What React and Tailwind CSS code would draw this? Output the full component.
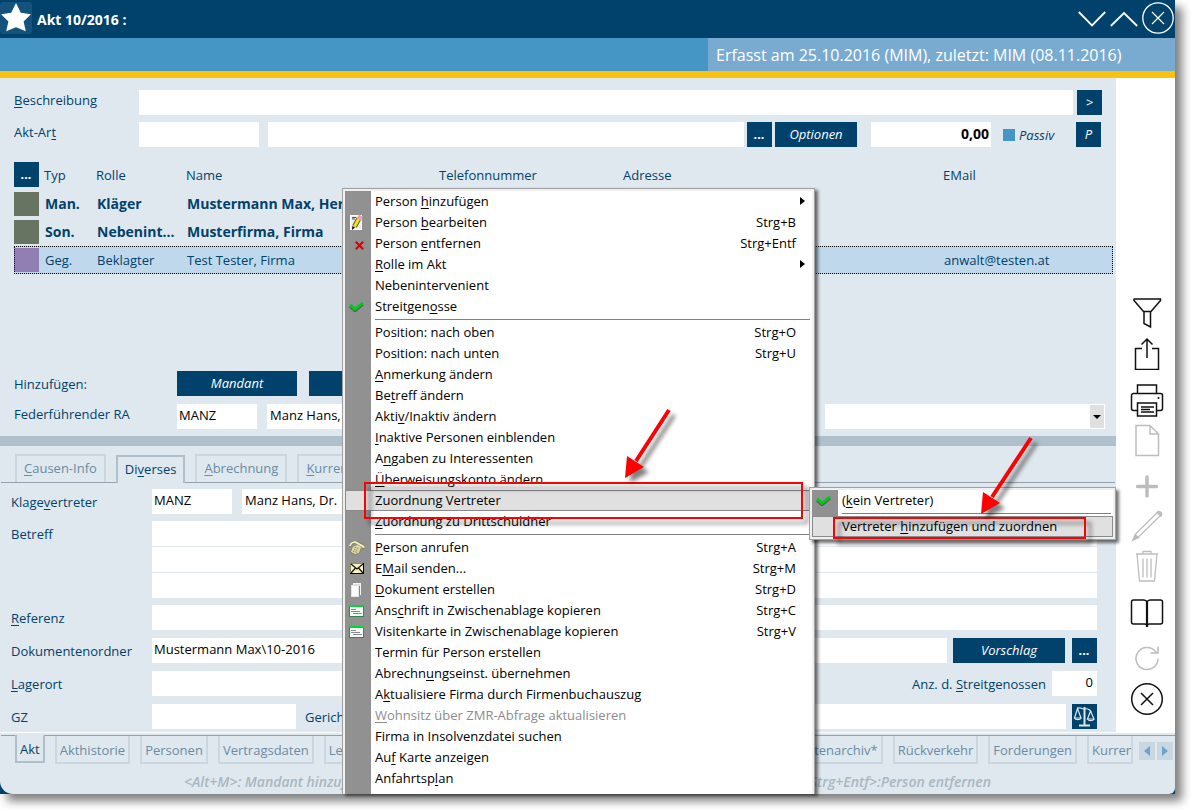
import React from "react";

const field = "h-[25px] min-w-0 border-0 bg-white px-[2px] pb-[3px] text-[13px] text-black outline-none";
const navy = "h-[25px] shrink-0 bg-[#00426b] text-[13px] leading-[25px] italic text-white";

/* Marks the character after "&" as the mnemonic. */
function Mn({ t }) {
  const i = t.indexOf("&");
  if (i < 0) return <>{t}</>;
  return (
    <>
      {t.slice(0, i)}
      <span className="underline underline-offset-2">{t[i + 1]}</span>
      {t.slice(i + 2)}
    </>
  );
}

const Star = () => (
  <svg width="32" height="32" viewBox="0 0 32 32">
    <rect width="32" height="32" rx="3" fill="#12527c" />
    <path d="M16 1l4.800 9.800 10.200 1.400-7.400 7.300 2.200 9.700L16 25.300l-9.800 3.900 2.200-9.700L1 12.200l10.200-1.400z" fill="#fff" />
  </svg>
);

const Check = () => (
  <svg width="15" height="11" viewBox="0 0 15 11">
    <path d="M1 5.500l5 4.500L14 3.200" fill="none" stroke="#4c5a4c" strokeWidth="2.500" />
    <path d="M1 4l5 4.200L14 1.800" fill="none" stroke="#00c81e" strokeWidth="3" />
  </svg>
);

const EditIcon = () => (
  <svg width="13" height="17" viewBox="0 0 13 17">
    <rect x="0.500" y="1.500" width="11" height="14" fill="#efefef" stroke="#fff" />
    <path d="M2 3.500h4M2 5h3" stroke="#555" />
    <path d="M9 4.500L4.500 12.500" stroke="#6b6200" strokeWidth="5" />
    <path d="M9 4.500L4.500 12.500" stroke="#f2df2a" strokeWidth="3" />
    <path d="M7 3.800l4.500 2.500" stroke="#bbb" strokeWidth="1.500" />
    <path d="M8 2.200l4 2.200" stroke="#f59ab4" strokeWidth="4" />
    <path d="M2 16l.3-4 2.700 1.500z" fill="#111" />
  </svg>
);

const CrossIcon = () => (
  <svg width="9" height="9" viewBox="0 0 9 9">
    <path d="M.8.8l7.400 7.400M8.200.8L.8 8.200" stroke="#d80000" strokeWidth="2" />
  </svg>
);

const PhoneIcon = () => (
  <svg width="16" height="14" viewBox="0 0 16 14">
    <path d="M3.500 5.500L9 3l4 2.500-3 7L6 13.500 1.500 11z" fill="#dedba6" stroke="#77744e" strokeWidth=".7" />
    <path d="M1 5.500C1.500 2.500 4 .8 6.500 1.200L14.500 5.500v2" fill="none" stroke="#77744e" strokeWidth="3" />
    <path d="M1 5C1.500 2.500 4 .8 6.500 1.200L14.500 5.500v1.500" fill="none" stroke="#f3f1c4" strokeWidth="2" />
    <path d="M6 6l4 2M5 8l4 2M4 10l4 1.500" stroke="#7d7a50" strokeWidth="1" strokeDasharray="1.500 1" />
  </svg>
);

const MailIcon = () => (
  <svg width="14" height="11" viewBox="0 0 14 11">
    <rect x=".5" y=".5" width="13" height="10" fill="#f6f3c0" stroke="#8c8c50" />
    <path d="M1 1l6 5L13 1M1 10l4.500-5M13 10L8.500 5" fill="none" stroke="#111" strokeWidth="1.200" />
    <path d="M0 10.500h14M13.500 0v11" stroke="#000" />
  </svg>
);

const DocsIcon = () => (
  <svg width="11" height="14" viewBox="0 0 11 14">
    <rect x="2.500" y=".5" width="7" height="11" fill="#ddd" stroke="#f5f5f5" />
    <rect x=".5" y="2.500" width="7" height="11" fill="#fff" stroke="#e4e4e4" />
    <path d="M8.500 3v9.500" stroke="#888" />
  </svg>
);

const CardIcon = () => (
  <svg width="15" height="12" viewBox="0 0 15 12">
    <rect x=".5" y=".5" width="14" height="11" fill="#f4faf4" stroke="#2c8a4a" />
    <path d="M0 1h15" stroke="#00d63c" strokeWidth="2" />
    <path d="M2 4.500h5M2 6.500h9M4 8.500h9" stroke="#8a8a8a" />
  </svg>
);

const menu = [
  { t: "Person &hinzufügen", sub: true },
  { t: "Person &bearbeiten", k: "Strg+B", i: <EditIcon /> },
  { t: "Person &entfernen", k: "Strg+Entf", i: <span className="pl-[6px] pt-[3px]"><CrossIcon /></span> },
  { t: "&Rolle im Akt", sub: true },
  { t: "Nebenintervenient" },
  { t: "Streitgen&osse", i: <Check /> },
  null,
  { t: "Position: nach oben", k: "Strg+O" },
  { t: "Position: nach unten", k: "Strg+U" },
  { t: "&Anmerkung ändern" },
  { t: "Be&treff ändern" },
  { t: "Akti&v/Inaktiv ändern" },
  { t: "&Inaktive Personen einblenden" },
  { t: "A&ngaben zu Interessenten" },
  { t: "&Überweisungskonto ändern" },
  { t: "Zuordnung Vertreter", active: true },
  { t: "&Zuordnung zu Drittschuldner" },
  null,
  { t: "&Person anrufen", k: "Strg+A", i: <PhoneIcon /> },
  { t: "E&Mail senden...", k: "Strg+M", i: <MailIcon /> },
  { t: "&Dokument erstellen", k: "Strg+D", i: <DocsIcon /> },
  { t: "Ans&chrift in Zwischenablage kopieren", k: "Strg+C", i: <CardIcon /> },
  { t: "Visitenkarte in Zwischenablage kopieren", k: "Strg+V", i: <CardIcon /> },
  { t: "Termin für Person erstellen" },
  { t: "Abrechn&ungseinst. übernehmen" },
  { t: "A&ktualisiere Firma durch Firmenbuchauszug" },
  { t: "&Wohnsitz über ZMR-Abfrage aktualisieren", off: true },
  { t: "Firma in Insolvenzdatei suchen" },
  { t: "Au&f Karte anzeigen" },
  { t: "Anfahrtsp&lan" },
];

const submenu = [
  { t: "(&kein Vertreter)", i: <Check /> },
  null,
  { t: "Vertreter &hinzufügen und zuordnen", active: true },
];

function MenuRows({ items }) {
  return items.map((m, n) =>
    m === null ? (
      <div key={n} role="separator" className="flex h-[5px]">
        <div className="w-[26px] shrink-0 bg-[#919191]" />
        <div className="mr-[2px] ml-1 mt-[2px] h-px flex-1 bg-[#808080]" />
      </div>
    ) : (
      <button
        key={n}
        role="menuitem"
        disabled={m.off}
        className={
          "flex h-[21px] w-full items-stretch text-left text-[13px] leading-[19px] " +
          (m.active ? "border border-[#8a8a8a] bg-[#e0e0e0] " : "border border-transparent ") +
          (m.off ? "text-[#8c8c8c]" : "text-black")
        }
      >
        <span
          className={
            "-my-px -ml-px flex w-[26px] shrink-0 items-center justify-center pr-[3px] " + (m.active ? "" : "bg-[#919191]")
          }
        >
          {m.i}
        </span>
        <span className="flex-1 pl-1"><Mn t={m.t} /></span>
        {m.k && <span className="pr-[15px]">{m.k}</span>}
        {m.sub && (
          <svg className="mt-[5px] mr-[6px]" width="5" height="8" viewBox="0 0 5 8"><path d="M0 0l5 4-5 4z" fill="#000" /></svg>
        )}
      </button>
    )
  );
}

function Tool({ label, children, off, className }) {
  return (
    <button aria-label={label} className={className + " block"}>
      <svg width="34" height="34" viewBox="0 0 34 34" fill="none" stroke={off ? "#bdbdbd" : "#111"} strokeWidth="1.500">
        {children}
      </svg>
    </button>
  );
}

function Sidebar() {
  return (
    <aside className="flex w-[59px] shrink-0 flex-col items-center bg-white pt-[217px] pl-[3px]">
      <Tool label="Filter" className="mt-0">
        <path d="M3.500 4h27v1.500L21 16.500h-7.500L4 5.500V4M14 16.500v12l6.500 3.500V16.500" />
      </Tool>
      <Tool label="Teilen" className="mt-[7px]">
        <path d="M12 12.500H5.500v21h23v-21H22M17 22V3M11.500 8.500L17 3l5.500 5.500" />
      </Tool>
      <Tool label="Drucken" className="mt-[13px]">
        <path d="M7.500 10.500V2h19v8.500M7 27.500H3.500a2 2 0 0 1-2-2v-13a2 2 0 0 1 2-2h27a2 2 0 0 1 2 2v13a2 2 0 0 1-2 2H27M7.500 20h19v13h-19zM11 24h13M11 26.500h9M11 29h13" />
        <circle cx="28.500" cy="15" r="1" fill="#111" stroke="none" />
      </Tool>
      <Tool label="Neu" off className="mt-[6px]">
        <path d="M6 2.500h14l8.500 8.500v21.500H6zM20 2.500v8.500h8.500" />
      </Tool>
      <Tool label="Hinzufügen" off className="mt-[12px]">
        <path d="M17 8v19M7.500 17.500h19" strokeWidth="3.500" strokeLinecap="round" />
      </Tool>
      <Tool label="Bearbeiten" off className="mt-[5px]">
        <path d="M4 31l2-5.500L27.500 4.500l3 3L9 28.500z" strokeWidth="1.300" />
        <path d="M27 4.500a2.500 2.500 0 0 1 4 3.500zM3 32l2-5 3.500 2.500z" fill="#bdbdbd" />
      </Tool>
      <Tool label="Löschen" off className="mt-[7px]">
        <path d="M6 5h22M13 5V2.500h8V5M7 5l2.500 27h15L27 5M13 9.500v19M17 9.500v19M21 9.500v19" strokeWidth="1.300" />
      </Tool>
      <Tool label="Buch" className="mt-[12px]">
        <path d="M17 6.500c-1-1-2-1.500-3.500-1.500h-10a2 2 0 0 0-2 2v20a2 2 0 0 0 2 2h11c1.500 0 2 .5 2.500 1 .5-.5 1-1 2.500-1h11a2 2 0 0 0 2-2V7a2 2 0 0 0-2-2h-10c-1.500 0-2.500.5-3.500 1.500" />
        <path d="M17 6v26" strokeWidth="2.200" />
      </Tool>
      <Tool label="Aktualisieren" off className="mt-[12px]">
        <path d="M28 17.500a11 11 0 1 1-3-7.500l2.500 2M20.500 12h7.500V5.500" />
      </Tool>
      <Tool label="Schließen" className="mt-[7px]">
        <circle cx="17" cy="17" r="15.300" />
        <path d="M11 11l12 12M23 11L11 23" />
      </Tool>
    </aside>
  );
}

const TopLabel = ({ t, id, className }) => (
  <label htmlFor={id} className={"shrink-0 pb-[6px] pl-[14px] text-[13px] " + className}><Mn t={t} /></label>
);
const Label = ({ t, id }) => (
  <label htmlFor={id} className="w-[152px] shrink-0 pl-[11px] text-[13px]"><Mn t={t} /></label>
);

const persons = [
  { c: "bg-[#687462]", typ: "Man.", rolle: "Kläger", name: "Mustermann Max, Herr", mail: "", b: true },
  { c: "bg-[#687462]", typ: "Son.", rolle: "Nebenint...", name: "Musterfirma, Firma", mail: "", b: true },
  { c: "bg-[#917fb3]", typ: "Geg.", rolle: "Beklagter", name: "Test Tester, Firma", mail: "anwalt@testen.at", sel: true },
];

function Persons() {
  return (
    <table className="mt-[15px] ml-[14px] w-[calc(100%-17px)] table-fixed border-collapse text-left text-[13px]">
      <colgroup>
        <col className="w-[25px]" /><col className="w-[52px]" /><col className="w-[90px]" /><col className="w-[253px]" />
        <col className="w-[184px]" /><col className="w-[320px]" /><col />
      </colgroup>
      <thead>
        <tr className="h-[28px] align-top">
          <th className="p-0"><button className={navy + " w-full font-bold"}>...</button></th>
          {["Typ", "Rolle", "Name", "Telefonnummer", "Adresse", "EMail"].map((h) => (
            <th key={h} className="p-0 pl-[5px] leading-[26px] font-normal">{h}</th>
          ))}
        </tr>
      </thead>
      <tbody>
        {persons.map((p) => (
          <tr
            key={p.typ}
            className={
              "h-[28px] " +
              (p.sel ? "bg-[#bfd8eb] outline-1 -outline-offset-1 outline-dotted outline-black " : "") +
              (p.b ? "text-[14px] font-bold" : "")
            }
          >
            <td className="p-0"><div className={"h-[24px] w-full " + p.c} /></td>
            <td className="p-0 pl-[6px]">{p.typ}</td>
            <td className="p-0 pl-[6px] whitespace-nowrap">{p.rolle}</td>
            <td className="p-0 pl-[6px] whitespace-nowrap">{p.name}</td>
            <td className="p-0" />
            <td className="p-0" />
            <td className="p-0 pl-[6px]">{p.mail}</td>
          </tr>
        ))}
      </tbody>
    </table>
  );
}

function TopTab({ t, active }) {
  return (
    <button
      role="tab"
      className={
        "shrink-0 border-2 border-b-0 px-[7px] text-[13px] " +
        (active
          ? "-mb-px h-[28px] border-[#afbfcc] bg-[#e0e8ef] pb-[2px] text-[#00426b]"
          : "h-[28px] border-[#cad7e1] pb-[2px] text-[#6a8ba4]")
      }
    >
      <Mn t={t} />
    </button>
  );
}

function BottomTab({ t, active, className = "px-[3px]" }) {
  return (
    <button
      role="tab"
      className={
        "h-[28px] shrink-0 border-2 border-t-0 pt-[2px] text-[13px] whitespace-nowrap " +
        (active ? "-mt-px border-[#afbfcc] bg-[#e0e8ef] text-[#00426b] " : "border-[#cad7e1] text-[#6a8ba4] ") +
        className
      }
    >
      {t}
    </button>
  );
}

export default function App() {
  return (
    <div className="bg-white pb-4 font-['Open_Sans','Noto_Sans',sans-serif] leading-[18px] text-[#00426b]">
      <div className="relative mr-4 bg-[#00426b] shadow-[7px_7px_9px_rgba(0,0,0,0.5)]">
        <header className="flex h-[38px] items-center pb-[2px] text-white">
          <Star />
          <h1 className="ml-[5px] flex-1 pt-[4px] text-[14px] font-bold">Akt 10/2016 :</h1>
          <div className="flex gap-[4px] pr-px">
            <button aria-label="Minimieren">
              <svg width="28" height="34" viewBox="0 0 28 34" fill="none" stroke="#fff" strokeWidth="1.800"><path d="M.8 11L14 24.500 27.200 11" /></svg>
            </button>
            <button aria-label="Maximieren">
              <svg width="28" height="34" viewBox="0 0 28 34" fill="none" stroke="#fff" strokeWidth="1.800"><path d="M.8 25L14 12l13.200 13" /></svg>
            </button>
            <button aria-label="Schließen">
              <svg width="32" height="34" viewBox="0 0 32 34" fill="none" stroke="#fff" strokeWidth="1.300"><circle cx="16" cy="17" r="15.200" /><path d="M10 11l12 12M22 11L10 23" /></svg>
            </button>
          </div>
        </header>
        <div className="flex h-[33px] justify-end bg-[#4595c5]">
          <div className="w-[467px] bg-[#79abd1] pl-2 text-[16px] leading-[34px] text-white">
            Erfasst am 25.10.2016 (MIM), zuletzt: MIM (08.11.2016)
          </div>
        </div>
        <div className="h-[7px] bg-[#f9c20f]" />

        <div className="flex bg-white">
          <main className="min-w-0 flex-1 bg-[#e0e8ef]">
            <div className="flex items-center pt-3 pr-[14px]">
              <TopLabel t="&Beschreibung" id="beschr" className="w-[139px]" />
              <input id="beschr" className={field + " flex-1"} />
              <button className={navy + " ml-1 w-[25px]"}>&gt;</button>
            </div>
            <div className="mt-[7px] flex items-center pr-[15px]">
              <TopLabel t="Akt-Ar&t" id="art" className="w-[139px]" />
              <input id="art" className={field + " w-[120px]"} />
              <input aria-label="Akt-Art Bezeichnung" className={field + " ml-[9px] flex-1"} />
              <button className={navy + " ml-[3px] w-[25px] font-bold"}>...</button>
              <button className={navy + " ml-[3px] w-[82px]"}>Optionen</button>
              <input
                aria-label="Betrag"
                defaultValue="0,00"
                className="ml-[14px] h-[25px] w-[120px] bg-white px-[2px] pb-[3px] text-right text-[14px] font-bold text-black outline-none"
              />
              <label className="ml-[12px] flex w-[73px] items-center gap-1 text-[13px] italic">
                <input type="checkbox" className="size-[12px] appearance-none bg-[#4595c5]" />
                Passiv
              </label>
              <button className={navy + " w-[25px]"}>P</button>
            </div>

            <Persons />

            <div className="mt-[97px] flex items-center">
              <span className="w-[177px] shrink-0 pl-[14px] text-[13px]">Hinzufügen:</span>
              <button className={navy + " w-[120px]"}>Mandant</button>
              <button aria-label="Gegner" className={navy + " ml-3 w-[120px]"} />
            </div>
            <div className="mt-[8px] flex items-center pr-[11px]">
              <TopLabel t="Federführender RA" id="ra" className="w-[177px]" />
              <input id="ra" defaultValue="MANZ" className={field + " w-[80px]"} />
              <input aria-label="Name RA" defaultValue="Manz Hans, Dr." className={field + " ml-[10px] w-[300px] pl-[3px]"} />
              <div className="ml-auto flex h-[25px] w-[280px] bg-white p-px">
                <select aria-label="Auswahl" className="min-w-0 flex-1 appearance-none bg-white outline-none"><option></option></select>
                <span className="flex w-[14px] items-center justify-center bg-[#e0e0e0]">
                  <svg width="8" height="4" viewBox="0 0 8 4"><path d="M0 0h8L4 4z" fill="#000" /></svg>
                </span>
              </div>
            </div>
            <div className="mt-[7px] h-[10px] bg-[#afbfcc]" />

            <div role="tablist" className="mx-px mt-[8px] flex items-end gap-[10px] border-b border-[#94a1ac] pl-[14px]">
              <TopTab t="&Causen-Info" />
              <TopTab t="Di&verses" active />
              <TopTab t="&Abrechnung" />
              <TopTab t="&Kurrent" />
            </div>

            <div className="mt-[6px] flex flex-col pr-[19px] pb-[3px]">
              <div className="flex items-center">
                <Label t="Klage&vertreter" id="kv" />
                <input id="kv" defaultValue="MANZ" className={field + " w-[80px]"} />
                <input aria-label="Name Klagevertreter" defaultValue="Manz Hans, Dr." className={field + " ml-[10px] w-[300px] pl-[3px]"} />
              </div>
              <div className="mt-[7px] flex items-start">
                <div className="flex h-[25px] items-center"><Label t="Betreff" id="b1" /></div>
                <div className="flex min-w-0 flex-1 flex-col gap-px">
                  <input id="b1" className={field + " w-full"} />
                  <input aria-label="Betreff 2" className={field + " w-full"} />
                  <input aria-label="Betreff 3" className={field + " w-full"} />
                </div>
              </div>
              <div className="mt-[7px] flex items-center">
                <Label t="&Referenz" id="ref" />
                <input id="ref" className={field + " flex-1"} />
              </div>
              <div className="mt-[8px] flex items-center">
                <Label t="Dokumentenordner" id="dok" />
                <input id="dok" defaultValue="Mustermann Max\10-2016" className={field + " flex-1"} />
                <button className={navy + " ml-[6px] w-[112px]"}>Vorschlag</button>
                <button className={navy + " ml-[7px] w-[25px] font-bold"}>...</button>
              </div>
              <div className="mt-[8px] flex items-center">
                <Label t="&Lagerort" id="lag" />
                <input id="lag" className={field + " w-[400px]"} />
                <label htmlFor="anz" className="ml-auto pr-[6px] text-[13px]"><Mn t="Anz. d. &Streitgenossen" /></label>
                <input id="anz" defaultValue="0" className={field + " w-[45px] pr-1 text-right"} />
              </div>
              <div className="mt-[8px] flex items-center">
                <Label t="GZ" id="gz" />
                <input id="gz" className={field + " w-[144px]"} />
                <label htmlFor="ger" className="w-[60px] pl-[9px] text-[13px]">Gericht</label>
                <input id="ger" className={field + " flex-1"} />
                <button aria-label="Gericht suchen" className={navy + " ml-[6px] w-[25px]"}>
                  <svg width="25" height="25" viewBox="0 0 25 25" fill="none" stroke="#dbe6ee" strokeWidth="1.200">
                    <path d="M12.500 3v18M7 21.500h11" strokeWidth="2" />
                    <path d="M5.500 4.500c3-2 5 1 7 .5s4-1 7 3M5.500 4.500L2.500 14h6.500zM18.500 7L15.500 15H22z" />
                    <path d="M2.500 14c1 2.200 5.500 2.200 6.500 0M15.500 15c1 2.200 5.500 2.200 6.500 0" />
                  </svg>
                </button>
              </div>
            </div>
          </main>
          <Sidebar />
        </div>

        <footer className="rounded-br-[6px] rounded-bl-[13px] bg-[#e0e8ef]">
          <div className="h-px bg-white" />
          <div className="ml-px mt-[2px] flex items-start border-t border-[#94a1ac] pl-[14px]">
            <div role="tablist" className="flex min-w-0 flex-1 justify-between">
              <div className="flex gap-[10px]">
                <BottomTab t="Akt" active />
                <BottomTab t="Akthistorie" />
                <BottomTab t="Personen" />
                <BottomTab t="Vertragsdaten" />
                <BottomTab t="Le" />
              </div>
              <div className="flex gap-[10px]">
                <BottomTab t="Datenarchiv*" />
                <BottomTab t="Rückverkehr" />
                <BottomTab t="Forderungen" />
                <BottomTab t="Kurren" className="w-[46px] overflow-hidden pl-[3px] text-left" />
              </div>
            </div>
            <div className="mt-[6px] mr-[2px] ml-[6px] flex gap-[2px]">
              <button aria-label="Zurück" className="flex h-[18px] w-[16px] items-center justify-center bg-[#cad7e1]">
                <svg width="6" height="10" viewBox="0 0 6 10"><path d="M6 0v10L0 5z" fill="#6aa5cf" /></svg>
              </button>
              <button aria-label="Weiter" className="flex h-[18px] w-[16px] items-center justify-center bg-[#cad7e1]">
                <svg width="6" height="10" viewBox="0 0 6 10"><path d="M0 0v10l6-5z" fill="#6aa5cf" /></svg>
              </button>
            </div>
          </div>
          <div className="flex h-[30px] justify-between px-[184px] pt-[9px] text-[14px] font-semibold italic text-[#a9b7c2]">
            <span>&lt;Alt+M&gt;: Mandant hinzufügen</span>
            <span>&lt;Strg+Entf&gt;:Person entfernen</span>
          </div>
        </footer>

        <div
          role="menu"
          className="absolute top-[188px] bottom-0 left-[342px] flex w-[473px] flex-col border border-b-0 border-[#a0a0a0] bg-[#f0f0f0] px-[2px] pt-[2px] shadow-[3px_2px_3px_rgba(0,0,0,0.55)]"
        >
          <div className="flex flex-1 flex-col bg-white">
            <MenuRows items={menu} />
            <div className="w-[26px] flex-1 bg-[#919191]" />
          </div>
        </div>
        <div className="absolute top-[482px] left-[364px] h-[37px] w-[439px] border-2 border-[#f00] drop-shadow-[5px_5px_2px_rgba(0,0,0,0.5)]" />
        <div
          role="menu"
          className="absolute top-[487px] left-[809px] w-[307px] border border-[#a0a0a0] bg-[#f0f0f0] p-[2px] shadow-[3px_3px_3px_rgba(0,0,0,0.55)]"
        >
          <div className="bg-white"><MenuRows items={submenu} /></div>
        </div>
        <div className="absolute top-[517px] left-[833px] h-[22px] w-[253px] border-2 border-[#f00] drop-shadow-[5px_5px_2px_rgba(0,0,0,0.5)]" />
        <svg
          className="pointer-events-none absolute top-[404px] left-[620px] drop-shadow-[5px_5px_2px_rgba(0,0,0,0.5)]"
          width="60"
          height="80"
          viewBox="0 0 60 80"
        >
          <path d="M49 6L16 57" stroke="#f00" strokeWidth="4" />
          <path d="M7 52l17 11L5 74z" fill="#f00" />
        </svg>
        <svg
          className="pointer-events-none absolute top-[430px] left-[976px] drop-shadow-[5px_5px_2px_rgba(0,0,0,0.5)]"
          width="65"
          height="90"
          viewBox="0 0 65 90"
        >
          <path d="M55 8L16 67" stroke="#f00" strokeWidth="4" />
          <path d="M7 62l17 11L5 84z" fill="#f00" />
        </svg>
      </div>
    </div>
  );
}
